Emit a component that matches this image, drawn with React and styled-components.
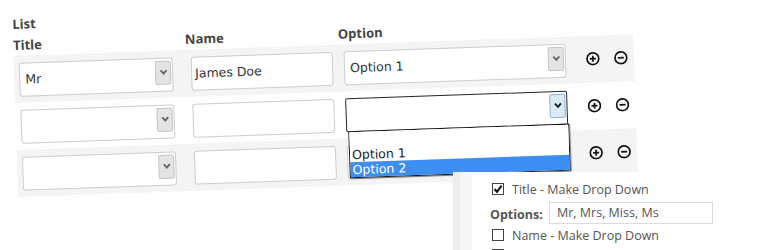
import React from 'react';
import styled, { createGlobalStyle } from 'styled-components';

const GlobalStyle = createGlobalStyle`
  html, body { margin: 0; padding: 0; background: #fff; }
`;

const Page = styled.div`
  position: relative;
  width: 772px;
  height: 250px;
  overflow: hidden;
  background: #fff;
`;

/* the list editor is photographed slightly tilted */
const Sheet = styled.div`
  width: 620px;
  margin: 15px 0 0 12px;
  transform: rotate(-2deg);
  transform-origin: 0 0;
`;

const Heading = styled.div`
  font-family: 'Open Sans', sans-serif;
  font-weight: 700;
  font-size: 13px;
  line-height: 18px;
  color: #444;
`;

const HeaderRow = styled.div`
  display: grid;
  grid-template-columns: 172px 153px 222px;
  margin: 3px 0 2px;
`;

const Row = styled.div`
  display: grid;
  grid-template-columns: 172px 153px 222px auto;
  align-items: center;
  height: 47px;
  padding-left: 5px;
  background: ${p => (p.$band ? '#f4f4f4' : 'transparent')};
`;

const Select = styled.div`
  position: relative;
  display: flex;
  align-items: flex-start;
  box-sizing: border-box;
  width: ${p => p.$w}px;
  height: 34px;
  background: #fff;
  border: 1px solid ${p => (p.$focus ? '#262626' : '#cdcdcd')};
  border-radius: ${p => (p.$focus ? '2px' : '3px')};
  font-family: 'DejaVu Sans', sans-serif;
  font-size: 12.5px;
  color: #333;
`;

const SelectText = styled.span`
  flex: 1;
  padding-left: 5px;
  line-height: 32px;
`;

const ArrowButton = styled.span`
  display: flex;
  align-items: center;
  justify-content: center;
  box-sizing: border-box;
  width: 16px;
  height: 24px;
  margin: 2px 1px 0 0;
  background: ${p => (p.$focus ? '#dce9f7' : '#e4e4e4')};
  border: 1px solid ${p => (p.$focus ? '#8eb0d8' : '#c4c4c4')};
  border-radius: 2px;
  color: ${p => (p.$focus ? '#1a1a1a' : '#666')};
`;

const TextInput = styled.div`
  box-sizing: border-box;
  width: 142px;
  height: 34px;
  padding-left: 3px;
  background: #fff;
  border: 1px solid #cdcdcd;
  border-radius: 3px;
  font-family: 'DejaVu Sans', sans-serif;
  font-size: 12.5px;
  line-height: 32px;
  color: #333;
`;

const DropList = styled.div`
  position: absolute;
  top: 100%;
  left: 1px;
  right: -2px;
  z-index: 3;
  background: #fff;
  border: 1px solid #111;
  box-shadow: 1px 1px 1px rgba(0, 0, 0, 0.45);
`;

const DropItem = styled.div`
  height: 15px;
  padding-left: 2px;
  line-height: 15px;
  font-family: 'DejaVu Sans', sans-serif;
  font-size: 12.5px;
  color: ${p => (p.$selected ? '#fff' : '#222')};
  background: ${p => (p.$selected ? '#3c8ef0' : '#fff')};
`;

const Actions = styled.div`
  display: flex;
  gap: 14px;
  margin: -2px 0 0 20px;
  color: #111;
`;

const Panel = styled.div`
  position: absolute;
  left: 453px;
  top: 172px;
  right: 0;
  bottom: 0;
  z-index: 2;
  display: flex;
  background: #fff;
`;

const Strip = styled.div`
  width: ${p => p.$w}px;
  background: ${p => p.$c};
`;

const PanelBody = styled.div`
  flex: 1;
  padding: 8px 0 0 18px;
  font-family: 'Open Sans', sans-serif;
  font-size: 12.5px;
  color: #555;
`;

const CheckRow = styled.div`
  display: flex;
  align-items: flex-start;
  height: 20px;
  line-height: 20px;
  margin-top: ${p => p.$mt || 0}px;
`;

const Box = styled.span`
  display: flex;
  align-items: center;
  justify-content: center;
  box-sizing: border-box;
  width: 12px;
  height: 12px;
  margin: 3px 8px 0 2px;
  border: 1px solid #444;
  background: #fff;
`;

const OptionsRow = styled.div`
  display: flex;
  align-items: flex-start;
  height: 22px;
  margin-top: 2px;
`;

const OptionsLabel = styled.span`
  width: 59px;
  font-weight: 700;
  line-height: 22px;
  margin-top: 2px;
`;

const OptionsInput = styled.div`
  box-sizing: border-box;
  width: 164px;
  height: 22px;
  padding-left: 7px;
  border: 1px solid #dcdcdc;
  line-height: 20px;
  color: #555;
`;

const Chevron = () => (
  <svg width="9" height="7" viewBox="0 0 9 7">
    <polyline points="1.5,1.5 4.5,4.8 7.5,1.5" fill="none" stroke="currentColor" strokeWidth="1.9" />
  </svg>
);

const PlusCircle = () => (
  <svg width="14" height="14" viewBox="0 0 14 14">
    <circle cx="7" cy="7" r="5.9" fill="none" stroke="currentColor" strokeWidth="1.7" />
    <path d="M4 7h6M7 4v6" stroke="currentColor" strokeWidth="1.7" />
  </svg>
);

const MinusCircle = () => (
  <svg width="14" height="14" viewBox="0 0 14 14">
    <circle cx="7" cy="7" r="5.9" fill="none" stroke="currentColor" strokeWidth="1.7" />
    <path d="M4 7h6" stroke="currentColor" strokeWidth="1.9" />
  </svg>
);

const Tick = () => (
  <svg width="10" height="10" viewBox="0 0 10 10">
    <polyline points="1.5,5 4,7.8 8.6,1.6" fill="none" stroke="#111" strokeWidth="2" />
  </svg>
);

const FakeSelect = ({ width, value, focus, children }) => (
  <Select $w={width} $focus={focus}>
    <SelectText>{value}</SelectText>
    <ArrowButton $focus={focus}><Chevron /></ArrowButton>
    {children}
  </Select>
);

const rows = [
  { title: 'Mr', name: 'James Doe', option: 'Option 1', band: true },
  { title: '', name: '', option: '', band: false, open: true },
  { title: '', name: '', option: '', band: true }
];

const App = () => (
  <Page>
    <GlobalStyle />
    <Sheet>
      <Heading>List</Heading>
      <HeaderRow>
        <Heading>Title</Heading>
        <Heading>Name</Heading>
        <Heading>Option</Heading>
      </HeaderRow>
      {rows.map((r, i) => (
        <Row key={i} $band={r.band}>
          <FakeSelect width={154} value={r.title} />
          <TextInput>{r.name}</TextInput>
          <FakeSelect width={222} value={r.option} focus={r.open}>
            {r.open && (
              <DropList>
                <DropItem />
                <DropItem>Option 1</DropItem>
                <DropItem $selected>Option 2</DropItem>
              </DropList>
            )}
          </FakeSelect>
          <Actions>
            <PlusCircle />
            <MinusCircle />
          </Actions>
        </Row>
      ))}
    </Sheet>

    <Panel>
      <Strip $w={7} $c="#eeeeee" />
      <Strip $w={12} $c="#f7f7f7" />
      <PanelBody>
        <CheckRow>
          <Box><Tick /></Box>
          Title - Make Drop Down
        </CheckRow>
        <OptionsRow>
          <OptionsLabel>Options:</OptionsLabel>
          <OptionsInput>Mr, Mrs, Miss, Ms</OptionsInput>
        </OptionsRow>
        <CheckRow $mt={2}>
          <Box />
          Name - Make Drop Down
        </CheckRow>
        <CheckRow>
          <Box />
        </CheckRow>
      </PanelBody>
    </Panel>
  </Page>
);

export default App;
